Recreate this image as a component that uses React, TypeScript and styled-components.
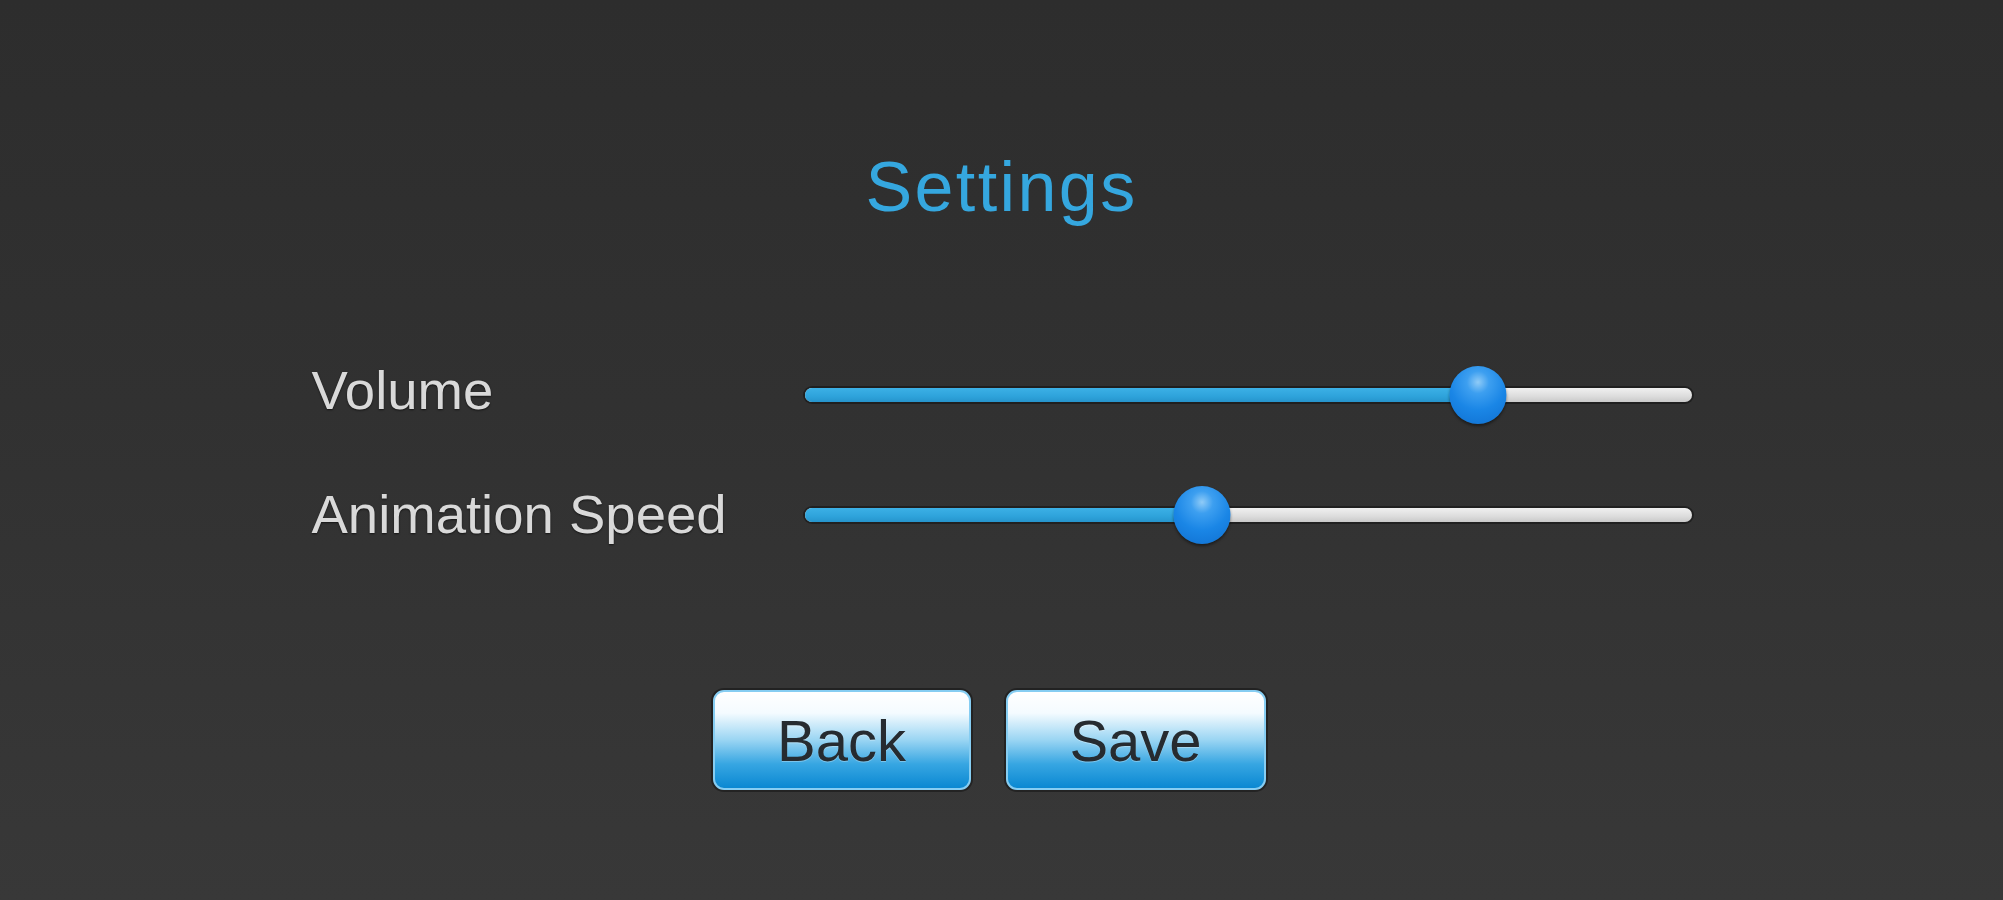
import React from "react"
import styled, { createGlobalStyle } from "styled-components"

const GlobalStyle = createGlobalStyle`
    html, body {
        margin: 0;
        padding: 0;
    }
    body {
        font-family: "Liberation Sans", Arial, sans-serif;
        background: #2e2e2e;
    }
`

const Screen = styled.div`
    height: 900px;
    box-sizing: border-box;
    padding-top: 152px;
    display: flex;
    flex-direction: column;
    align-items: center;
    background: linear-gradient(180deg, #2d2d2d 0%, #313131 45%, #383838 100%);
`

const Title = styled.h1`
    margin: 0;
    font-size: 70px;
    line-height: 70px;
    font-weight: normal;
    letter-spacing: 2.4px;
    color: #35a7df;
`

const Form = styled.div`
    margin-top: 133px;
    display: grid;
    grid-template-columns: 493px 887px;
    row-gap: 40px;
`

const Row = styled.div`
    display: contents;
`

const Label = styled.div<{ $lift?: number }>`
    height: 80px;
    display: flex;
    align-items: center;
    padding-bottom: ${(p) => p.$lift ?? 0}px;
    box-sizing: border-box;
    font-size: 54.5px;
    line-height: 1;
    color: #d9d9d9;
    text-shadow: 0 1px 2px rgba(0, 0, 0, 0.6);
`

const SliderBox = styled.div`
    height: 80px;
    display: flex;
    align-items: center;
`

const Track = styled.div`
    position: relative;
    width: 100%;
    height: 14px;
    border-radius: 7px;
    background: linear-gradient(180deg, #f0f0f0 0%, #dcdcdc 60%, #c9c9c9 100%);
    box-shadow: 0 0 0 2px rgba(0, 0, 0, 0.35);
`

const Fill = styled.div`
    height: 100%;
    border-radius: 7px 0 0 7px;
    background: linear-gradient(180deg, #3cb0e6 0%, #2ea3db 60%, #2694cc 100%);
`

const Thumb = styled.div`
    position: absolute;
    top: 50%;
    width: 57px;
    height: 58px;
    border-radius: 50%;
    transform: translate(-50%, -50%);
    background: radial-gradient(circle at 50% 28%, #8fcbf7 0%, #3d9ff0 22%, #1a86e6 55%, #0f6fd0 100%);
    box-shadow: 0 2px 3px rgba(0, 0, 0, 0.45);
`

const Buttons = styled.div`
    margin-top: 135px;
    padding-right: 25px;
    display: flex;
    gap: 35px;
`

const Button = styled.button<{ $width: number }>`
    width: ${(p) => p.$width}px;
    height: 100px;
    box-sizing: border-box;
    border: 2px solid #86cdf2;
    border-radius: 11px;
    background: linear-gradient(180deg, #ffffff 0%, #f4fbff 22%, #9ad5f3 50%, #37a6e2 75%, #0a88d2 100%);
    box-shadow: 0 0 0 2px rgba(0, 0, 0, 0.35);
    font-family: "Liberation Sans", Arial, sans-serif;
    font-size: 58px;
    color: #262b30;
    text-shadow: 0 1px 0 rgba(255, 255, 255, 0.3);
    padding: 0;
    cursor: pointer;
`

type SliderProps = { value: number }

const Slider: React.FC<SliderProps> = ({ value }) => (
    <SliderBox>
        <Track>
            <Fill style={{ width: `${value * 100}%` }} />
            <Thumb style={{ left: `${value * 100}%` }} />
        </Track>
    </SliderBox>
)

const settings = [
    { name: "Volume", value: 0.759, lift: 8 },
    { name: "Animation Speed", value: 0.448, lift: 0 },
]

export default function App() {
    return (
        <>
            <GlobalStyle />
            <Screen>
                <Title>Settings</Title>
                <Form>
                    {settings.map((s) => (
                        <Row key={s.name}>
                            <Label $lift={s.lift}>{s.name}</Label>
                            <Slider value={s.value} />
                        </Row>
                    ))}
                </Form>
                <Buttons>
                    <Button $width={258}>Back</Button>
                    <Button $width={260}>Save</Button>
                </Buttons>
            </Screen>
        </>
    )
}
